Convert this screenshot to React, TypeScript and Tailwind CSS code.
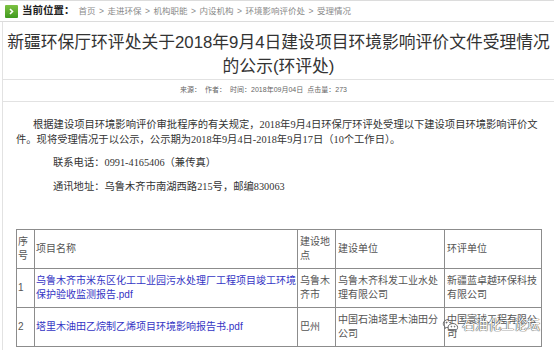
import React from "react";

const SERIF = "font-['Liberation_Serif','Noto_Sans_CJK_SC',serif]";
const SANS = "font-['Liberation_Sans','Noto_Sans_CJK_SC',sans-serif]";

const crumbs = ["首页", "走进环保", "机构职能", "内设机构", "环境影响评价处", "受理情况"];

type Row = {
  no: string;
  name: string[];
  place: string[];
  builder: string[];
  eia: string[];
};

const rows: Row[] = [
  {
    no: "1",
    name: ["乌鲁木齐市米东区化工工业园污水处理厂工程项目竣工环境", "保护验收监测报告.pdf"],
    place: ["乌鲁木", "齐市"],
    builder: ["乌鲁木齐科发工业水处", "理有限公司"],
    eia: ["新疆蓝卓越环保科技", "有限公司"],
  },
  {
    no: "2",
    name: ["塔里木油田乙烷制乙烯项目环境影响报告书.pdf"],
    place: ["巴州"],
    builder: ["中国石油塔里木油田分", "公司"],
    eia: ["中国寰球工程有限公", "司"],
  },
];

function Lines({ items }: { items: string[] }) {
  return (
    <>
      {items.map((line) => (
        <div key={line} className="whitespace-nowrap">
          {line}
        </div>
      ))}
    </>
  );
}

function WechatIcon() {
  return (
    <svg width="17" height="15" viewBox="0 0 17 15" fill="none" stroke="#666" strokeWidth="1">
      <path d="M6.5 1.5c-3 0-5.2 1.9-5.2 4.2 0 1.3.7 2.4 1.8 3.2l-.4 1.6 1.9-1c.6.2 1.2.3 1.9.3" />
      <path d="M11 5.5c-2.9 0-5 1.7-5 3.8s2.1 3.8 5 3.8c.6 0 1.1-.1 1.6-.2l1.7.9-.4-1.4c1-.7 1.7-1.8 1.7-3 0-2.1-2.2-3.9-4.6-3.9z" />
      <circle cx="4.6" cy="4.6" r=".5" fill="#666" />
      <circle cx="8.2" cy="4.6" r=".5" fill="#666" />
      <circle cx="9.4" cy="8.6" r=".4" fill="#666" />
      <circle cx="12.6" cy="8.6" r=".4" fill="#666" />
    </svg>
  );
}

export default function App() {
  return (
    <div className="relative h-[350px] w-[554px] overflow-hidden bg-white text-[#333]">
      {/* breadcrumb bar */}
      <div className="flex h-[22px] items-center border-y border-[#dcdcdc] pl-[5px]">
        <span className="flex h-[13px] w-[13px] items-center justify-center rounded-[1px] bg-gradient-to-b from-[#7cc142] to-[#3f9a1e]">
          <svg width="7" height="7" viewBox="0 0 7 7" fill="none" stroke="white" strokeWidth="1.6">
            <path d="M2 1l2.5 2.5L2 6" />
          </svg>
        </span>
        <span className={`ml-[4px] text-[10.5px] font-bold text-[#222] ${SERIF}`}>当前位置：</span>
        <span className={`ml-[4px] flex items-center text-[8.5px] text-[#8a8a8a] ${SANS}`}>
          {crumbs.map((c, i) => (
            <span key={c} className="flex items-center">
              {i > 0 ? <span className="mx-[3.5px]">&gt;</span> : null}
              {c}
            </span>
          ))}
        </span>
      </div>

      <div className="ml-[2px] h-full border-l border-[#e2e2e2]">
        <h1
          className={`pt-[9px] text-center text-[16.8px] font-normal leading-[24px] text-[#333] ${SANS}`}
        >
          新疆环保厅环评处关于2018年9月4日建设项目环境影响评价文件受理情况
          <br />
          的公示(环评处)
        </h1>

        <div
          className={`flex h-[23px] items-center justify-center border-y border-[#e2e2e2] pr-[30px] text-[7px] text-[#666] ${SANS}`}
        >
          <span>来源：</span>
          <span className="ml-[4px]">作者：</span>
          <span className="ml-[4px]">时间：2018年09月04日</span>
          <span className="ml-[4px]">点击量：273</span>
        </div>

        <div className={`pl-[13px] pt-[15px] text-[10.3px] leading-[15px] text-[#333] ${SERIF}`}>
          <p className="whitespace-nowrap">
            <span className="block w-[513px] indent-[17px] text-justify [text-align-last:justify]">
              根据建设项目环境影响评价审批程序的有关规定，2018年9月4日环保厅环评处受理以下建设项目环境影响评价文
            </span>
            <span className="block">
              件。现将受理情况于以公示，公示期为2018年9月4日-2018年9月17日（10个工作日）。
            </span>
          </p>
          <p className="mt-[8px] pl-[37px]">联系电话：0991-4165406（兼传真）</p>
          <p className="mt-[9px] pl-[37px]">通讯地址：乌鲁木齐市南湖西路215号，邮编830063</p>

          <table
            className={`mt-[35px] w-[525px] table-fixed border-collapse text-[10px] leading-[14px] text-[#555] ${SANS}`}
          >
            <colgroup>
              <col className="w-[18px]" />
              <col className="w-[263px]" />
              <col className="w-[38px]" />
              <col className="w-[109px]" />
              <col className="w-[97px]" />
            </colgroup>
            <tbody>
              <tr className="h-[39px]">
                <td className="border border-[#8c8c8c] px-[1px] align-middle">
                  <Lines items={["序", "号"]} />
                </td>
                <td className="border border-[#8c8c8c] px-[1px] align-middle">项目名称</td>
                <td className="border border-[#8c8c8c] px-[2px] align-middle">
                  <Lines items={["建设地", "点"]} />
                </td>
                <td className="border border-[#8c8c8c] px-[2px] align-middle">建设单位</td>
                <td className="border border-[#8c8c8c] px-[2px] align-middle">环评单位</td>
              </tr>
              {rows.map((row) => (
                <tr key={row.no} className="h-[39px]">
                  <td className="border border-[#8c8c8c] px-[1px] align-middle">{row.no}</td>
                  <td className="overflow-hidden border border-[#8c8c8c] px-[1px] align-middle text-[#3434c4]">
                    <Lines items={row.name} />
                  </td>
                  <td className="border border-[#8c8c8c] px-[2px] align-middle">
                    <Lines items={row.place} />
                  </td>
                  <td className="border border-[#8c8c8c] px-[2px] align-middle">
                    <Lines items={row.builder} />
                  </td>
                  <td className="border border-[#8c8c8c] px-[2px] align-middle">
                    <Lines items={row.eia} />
                  </td>
                </tr>
              ))}
            </tbody>
          </table>
        </div>
      </div>

      {/* watermark */}
      <div className="absolute left-[442px] top-[317px] flex items-center gap-[3px]">
        <WechatIcon />
        <span
          className={`text-[13px] leading-[16px] text-white [text-shadow:0_0_1px_#555,0_0_1px_#555,0_0_1px_#555] ${SANS}`}
        >
          石油化工论坛
        </span>
      </div>
    </div>
  );
}
